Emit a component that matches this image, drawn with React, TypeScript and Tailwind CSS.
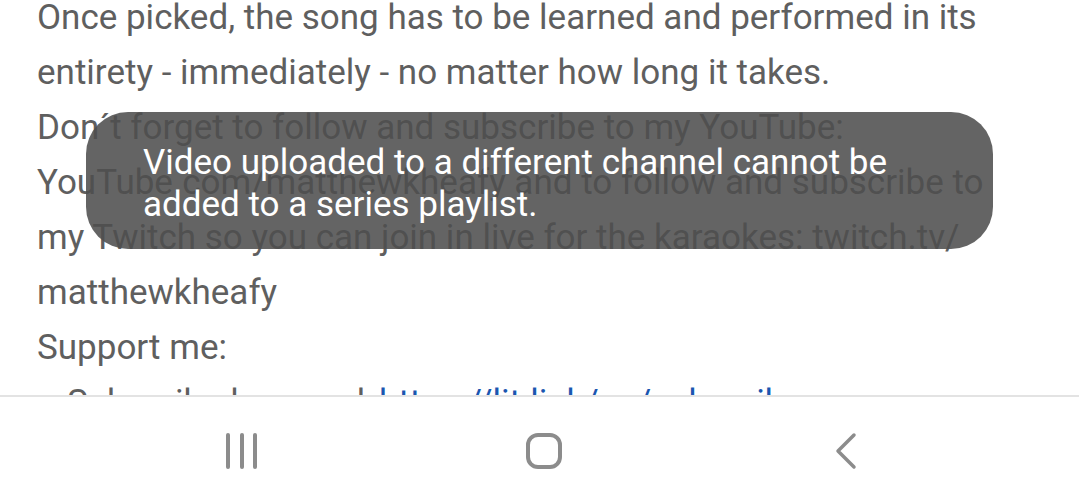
import React from 'react';

const lines = [
  'Once picked, the song has to be learned and performed in its',
  'entirety - immediately - no matter how long it takes.',
  'Don´t forget to follow and subscribe to my YouTube:',
  'YouTube.com/matthewkheafy and to follow and subscribe to',
  'my Twitch so you can join in live for the karaokes: twitch.tv/',
  'matthewkheafy',
  'Support me:',
];

export default function App() {
  return (
    <div className="relative flex h-[502px] w-[1079px] flex-col overflow-hidden bg-white font-['Roboto',sans-serif]">
      <div className="flex-1 overflow-hidden">
        <div className="-mt-[10px] pl-[37px] text-[35px] leading-[55px] text-[#5f5f5f]">
          {lines.map((line) => (
            <div key={line} className="whitespace-nowrap">
              {line}
            </div>
          ))}
          <div className="flex items-center whitespace-nowrap pl-[30px]">
            <span>Subscribe here and</span>
            <span className="ml-[14px] text-[#1a56b0]">https://lit.link/en/subscribe</span>
          </div>
        </div>
      </div>

      <nav className="grid h-[107px] grid-cols-[302px_302px_302px] items-center border-t-2 border-[#e3e3e3] bg-white pl-[91px] pt-[2px]">
        <div className="flex justify-center">
          <svg width="36" height="36" viewBox="0 0 36 36" fill="none" stroke="#8c8c8c" strokeWidth="4" strokeLinecap="round">
            <line x1="4" y1="2" x2="4" y2="34" />
            <line x1="18" y1="2" x2="18" y2="34" />
            <line x1="31" y1="2" x2="31" y2="34" />
          </svg>
        </div>
        <div className="flex justify-center">
          <svg width="38" height="38" viewBox="0 0 38 38" fill="none" stroke="#8c8c8c" strokeWidth="4">
            <rect x="3" y="3" width="32" height="32" rx="10" />
          </svg>
        </div>
        <div className="flex justify-center">
          <svg width="26" height="38" viewBox="0 0 26 38" fill="none" stroke="#8c8c8c" strokeWidth="3.5" strokeLinecap="round" strokeLinejoin="round">
            <polyline points="21,3 5,19 21,35" />
          </svg>
        </div>
      </nav>

      <div className="absolute left-[86px] top-[112px] flex h-[137px] w-[907px] flex-col justify-center rounded-[42px] bg-[#4e4e4e]/[0.875] pl-[57px] pt-[6px] text-[35px] leading-[42px] text-white">
        <div>Video uploaded to a different channel cannot be</div>
        <div>added to a series playlist.</div>
      </div>
    </div>
  );
}
